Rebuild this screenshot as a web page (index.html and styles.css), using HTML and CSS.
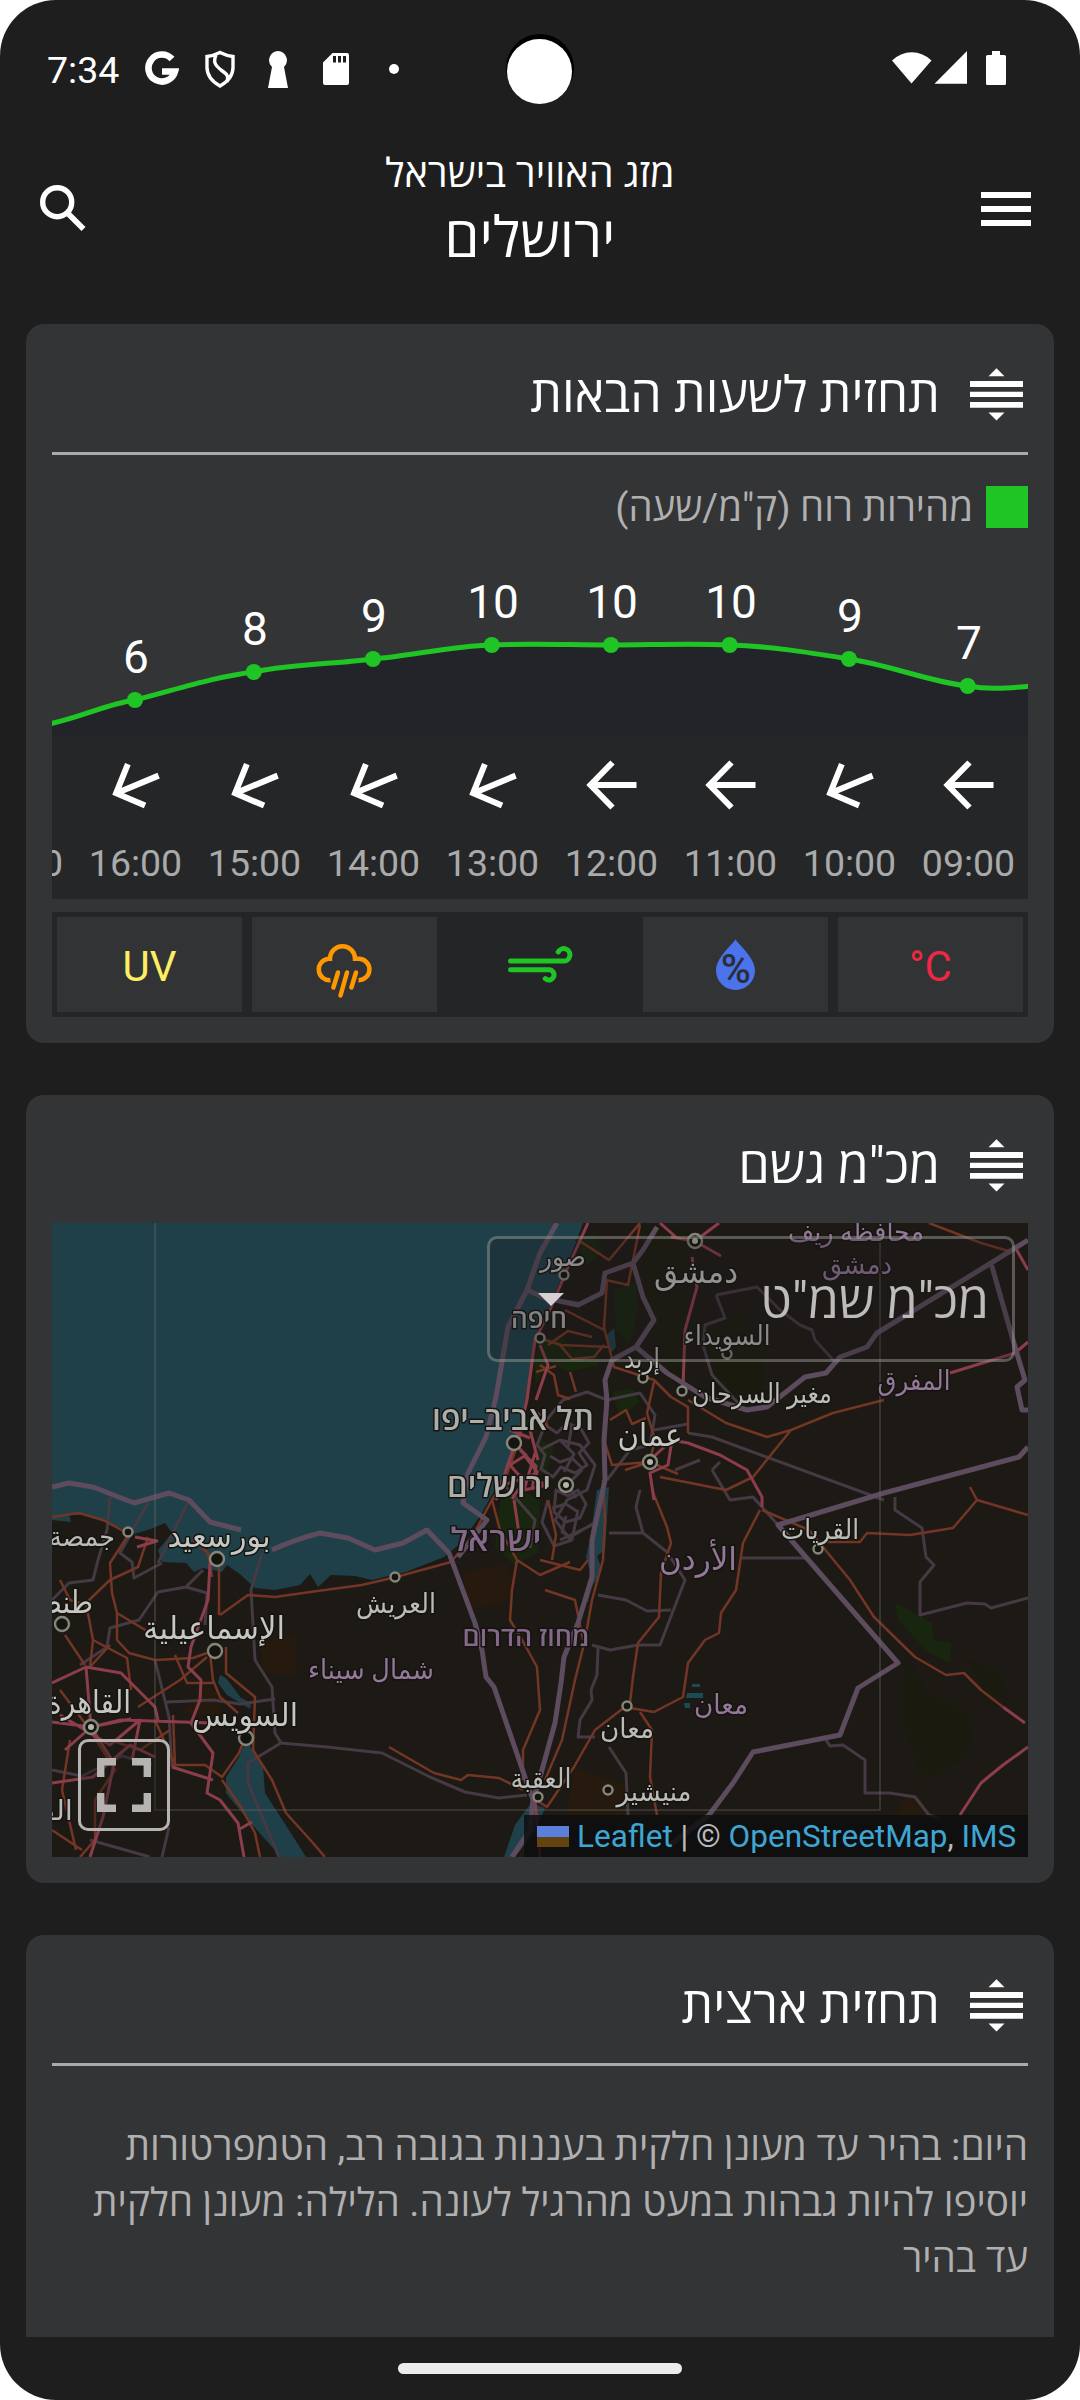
FILE: index.html
```html
<!DOCTYPE html>
<html lang="he" dir="rtl">
<head>
<meta charset="utf-8">
<title>מזג האוויר בישראל</title>
<link rel="stylesheet" href="styles.css">
</head>
<body>
<svg class="defs" width="0" height="0">
  <symbol id="drag" viewBox="0 0 53 53">
    <path d="M26.500 .3l8 8h-16zM26.500 52.500l-8-8h16zM0 13h53v6H0zM0 23.700h53v5.300H0zM0 34h53v5.700H0z" fill="#fff"/>
  </symbol>
  <symbol id="arrow" viewBox="-26 -26 52 52">
    <path d="M24.500 0H-20M.5-22.500L-21.500 0L.5 22.500" fill="none" stroke="#fff" stroke-width="6"/>
  </symbol>
</svg>
<div class="screen">
  <div class="status" dir="ltr">
    <span class="clock">7:34</span>
    <span class="tray">
      <svg viewBox="0 0 34 36" width="34" height="36"><path d="M27 8A13.500 13.500 0 1 0 30 20.500H17" fill="none" stroke="#fff" stroke-width="6.600"/></svg>
      <svg viewBox="0 0 32 38" width="32" height="38"><path d="M16 2.500c4 2 8 3.500 13 4v11c0 8-5 14-13 18.500C8 31.500 3 25.500 3 17.500v-11c5-.5 9-2 13-4zM12 5c-3 7-1 10 5 15 6 4 8 6 6 12" fill="none" stroke="#fff" stroke-width="3.400"/></svg>
      <svg viewBox="0 0 20 37" width="20" height="37"><path d="M10 0a9.300 9.300 0 0 1 6 16l4 21H0l4-21A9.300 9.300 0 0 1 10 0z" fill="#fff"/></svg>
      <svg viewBox="0 0 26 34" width="26" height="34"><path d="M9.500 1H24a2 2 0 0 1 2 2v28a2 2 0 0 1-2 2H2a2 2 0 0 1-2-2V10.500zM10 4v6.500h3V4zM15 4v6.500h3V4zM20 4v6.500h3V4z" fill="#fff" fill-rule="evenodd"/></svg>
      <svg viewBox="0 0 10 10" width="10" height="10"><circle cx="5" cy="5" r="5" fill="#fff"/></svg>
    </span>
    <svg class="signals" viewBox="891 50 116 36" width="116" height="36"><path d="M892 60.500a28 28 0 0 1 39.500 0L911.500 83.500zM934.500 83.700H967V51zM992 51h8v4h4.500a1.500 1.500 0 0 1 1.500 1.500v27a1.500 1.500 0 0 1-1.500 1.500h-17a1.500 1.500 0 0 1-1.500-1.500v-27a1.500 1.500 0 0 1 1.500-1.500h4.500z" fill="#fff"/></svg>
    <span class="camera"></span>
  </div>
  <header class="topbar" dir="ltr">
    <svg class="search" viewBox="0 0 46 46" width="46" height="46"><circle cx="17.200" cy="17.200" r="14.500" fill="none" stroke="#fff" stroke-width="5.400"/><path d="M28.500 29L43.500 44" stroke="#fff" stroke-width="5.600"/></svg>
    <div class="heading" dir="rtl">
      <div class="app">מזג האוויר בישראל</div>
      <div class="city">ירושלים</div>
    </div>
    <svg class="menu" viewBox="0 0 50 34" width="50" height="34"><path d="M0 0h50v6H0zM0 14h50v6H0zM0 28h50v6H0z" fill="#fff"/></svg>
  </header>

  <main class="content">
    <section class="card">
      <div class="card-head ruled">
        <svg width="53" height="53"><use href="#drag"/></svg>
        <h2>תחזית לשעות הבאות</h2>
      </div>
      <div class="legend"><span class="swatch"></span><span>מהירות רוח (ק"מ/שעה)</span></div>
      <svg class="chart" viewBox="52 528 976 207" width="976" height="207">
        <path d="M52 723.300C82 717 107 704 135 700C175 690 213 677 253.800 672C293 664 335 664 373 659C412 656 450 646 491.800 645C532 643 570 645 611 645C650 645 690 643 729.700 645C770 646 812 653 849 659C890 665 930 682 967.700 686C990 690 1008 688 1028 686.300V735H52z" fill="#232429"/>
        <path d="M48 724.300C82 717 107 704 135 700C175 690 213 677 253.800 672C293 664 335 664 373 659C412 656 450 646 491.800 645C532 643 570 645 611 645C650 645 690 643 729.700 645C770 646 812 653 849 659C890 665 930 682 967.700 686C990 690 1008 688 1032 686" fill="none" stroke="#1fc525" stroke-width="5"/>
        <g fill="#1fc525"><circle cx="135" cy="700" r="8"/><circle cx="253.800" cy="672" r="8"/><circle cx="373" cy="659" r="8"/><circle cx="491.800" cy="645" r="8"/><circle cx="611" cy="645" r="8"/><circle cx="729.700" cy="645" r="8"/><circle cx="849" cy="659" r="8"/><circle cx="967.700" cy="686" r="8"/></g>
        <g class="values"><text x="136" y="673">6</text><text x="255" y="645">8</text><text x="374" y="631.500">9</text><text x="493" y="618">10</text><text x="612" y="618">10</text><text x="731" y="618">10</text><text x="850" y="631.500">9</text><text x="969" y="659">7</text></g>
      </svg>
      <div class="hours">
        <div class="hour"><svg><use href="#arrow"/></svg><span>09:00</span></div>
        <div class="hour"><svg class="tilt"><use href="#arrow"/></svg><span>10:00</span></div>
        <div class="hour"><svg><use href="#arrow"/></svg><span>11:00</span></div>
        <div class="hour"><svg><use href="#arrow"/></svg><span>12:00</span></div>
        <div class="hour"><svg class="tilt"><use href="#arrow"/></svg><span>13:00</span></div>
        <div class="hour"><svg class="tilt"><use href="#arrow"/></svg><span>14:00</span></div>
        <div class="hour"><svg class="tilt"><use href="#arrow"/></svg><span>15:00</span></div>
        <div class="hour"><svg class="tilt"><use href="#arrow"/></svg><span>16:00</span></div>
        <div class="hour"><svg class="tilt"><use href="#arrow"/></svg><span>17:00</span></div>
      </div>
      <div class="tabs" dir="ltr">
        <div class="tab label uv">UV</div>
        <div class="tab"><svg viewBox="317 930 57 70" width="57" height="70"><g fill="none" stroke="#ff9800" stroke-width="4.500"><path d="M331.500 980.200A10.700 10.700 0 0 1 329.500 958.800H331A12.500 12.500 0 0 1 356 958.800H360A10.700 10.700 0 0 1 359.500 980.200"/><path stroke-linecap="round" d="M339 972.500l-4.600 15M348 972.500l-6.500 23M357 972.500l-4.600 15"/></g></svg></div>
        <div class="tab active"><svg viewBox="508 946 66 38" width="66" height="38"><path d="M511.500 961H564a6.200 6.200 0 1 0-4.800-9M511.500 969.700H550.500a5.200 5.200 0 1 1-4.200 9" fill="none" stroke="#1fc525" stroke-width="5" stroke-linecap="round"/></svg></div>
        <div class="tab"><svg viewBox="715 938 41 54" width="41" height="54"><path d="M735.500 939.500C740 946 755 958 755 970.500A19.500 19.500 0 0 1 716 970.500C716 958 731 946 735.500 939.500z" fill="#4b73eb"/><text x="735.800" y="983" class="percent">%</text></svg></div>
        <div class="tab label temp">°C</div>
      </div>
    </section>

    <section class="card">
      <div class="card-head">
        <svg width="53" height="53"><use href="#drag"/></svg>
        <h2>מכ"מ גשם</h2>
      </div>
      <div class="map">
        <svg class="tiles" viewBox="52 1223 976 634" width="976" height="634">
          <rect x="52" y="1223" width="976" height="634" fill="#1d1915"/>
          <g fill="#1f4049">
            <path d="M52 1223H583L575 1245L562 1276L547 1312L538 1318L537 1337L530 1377L520 1427L503 1477L489 1500L482 1513L461 1543L444 1557L406 1572L372 1580L355 1576L331 1575L318 1587L310 1574L300 1585L275 1590L255 1588L241 1575L227 1565L222 1572L203 1568L194 1572L186 1563L162 1562L158 1550L172 1533L165 1523L151 1529L134 1534L114 1525L83 1515L69 1515L71 1522L52 1520z"/>
            <path d="M246 1740L263 1767L265 1793L287 1827L306 1857H281L248 1820L226 1793V1777L239 1757z"/>
            <path d="M220 1675L226 1678L241 1698L251 1703L250 1709L227 1695L218 1683z"/>
            <path d="M597 1490L609 1487L605 1550L597 1556L602 1570L592 1587L588 1602L583 1598L591 1575L586 1557L590 1540z"/>
            <path d="M605 1337L614 1328L616 1347L611 1353z"/>
            <path d="M531 1803L545 1808L536 1830L515 1857H504L515 1825z"/>
            <path d="M692 1684h8v3h-8zM687 1693h16v5h-17zM684 1703h6v5h-5z" fill="#1a4a55"/>
          </g>
          <g fill="#18250f">
            <path d="M895 1602L932 1623L934 1640L951 1643L950 1663L929 1653L898 1620z"/>
            <path d="M614 1290L636 1282L638 1310L630 1345L616 1330z"/>
            <path d="M540 1340L560 1335L575 1350L600 1345L598 1365L570 1372L548 1362L536 1385L534 1360z"/>
            <path d="M500 1500L520 1490L540 1500L538 1552L515 1565L495 1548z"/>
            <path d="M612 1392l20-4 8 14-20 14zM540 1440l14 6-8 30-12-8zM575 1240l20-6 8 18-16 14z"/>
            <path d="M938 1750l10 4 8 14-8-2zM525 1420l10-8 2 20-8 4z"/>
          </g>
          <g fill="#1a1a0f">
            <path d="M640 1225L690 1232L683 1390L660 1370L648 1320L645 1270z"/>
            <path d="M700 1330L740 1310L765 1345L760 1400L715 1390z"/>
            <path d="M905 1650L925 1690L975 1715L965 1760L925 1780L903 1725zM968 1660l30 10 12 30-25-8z"/>
          </g>
          <g fill="#251a0d">
            <path d="M462 1572L505 1565L515 1582L503 1603L470 1610z"/>
            <path d="M258 1642L296 1634V1677L264 1672z"/>
            <path d="M575 1768L625 1785L628 1815H566z"/>
            <path d="M905 1797L922 1800L929 1815H896zM205 1685l20 12-8 20-36-4z"/>
          </g>
          <g class="admin">
            <path d="M688 1433L712 1437L884 1500M740 1558H805M712 1470L730 1500L753 1497L778 1525M712 1470L720 1462"/>
            <path d="M609 1533L643 1533L667 1552L685 1580L660 1645H638L610 1650L592 1645M640 1490L636 1507L643 1533M598 1595L626 1600L647 1611L671 1610"/>
            <path d="M598 1647L597 1675L591 1690L592 1700L580 1720L578 1737H595M609 1747L626 1773L628 1815"/>
            <path d="M895 1497V1510L922 1528L926 1557L934 1565L920 1582V1615L967 1603L985 1604L991 1608L1028 1598"/>
            <path d="M826 1740L830 1746L843 1745L865 1760V1793H890L915 1797L929 1815L940 1818"/>
            <path d="M110 1497L107 1530L98 1560L93 1580L69 1583L52 1600M148 1503L120 1553L132 1562L134 1578L162 1563M189 1500L158 1563"/>
            <path d="M203 1570L186 1587L158 1592L139 1620L110 1628L107 1647L80 1665M186 1587L207 1593L205 1625"/>
            <path d="M262 1553L251 1590L255 1660L272 1687L275 1733L281 1743L248 1763V1783L279 1857"/>
            <path d="M281 1743L327 1747L382 1753L430 1777L465 1792L499 1798L527 1795M155 1660L169 1717L172 1767M167 1702L213 1700L240 1704L275 1699M169 1827L162 1857"/>
            <path d="M716 1295L757 1287L780 1310L800 1325L812 1330L815 1340L836 1363M716 1295L725 1318L705 1325L703 1345L712 1375L740 1405"/>
            <path d="M607 1400L640 1393L655 1415L650 1445L630 1450L607 1480M607 1400l-20-8-24 8-18 22M545 1298L578 1303M654 1430l34-6M675 1470l25-10"/>
            <path d="M540 1450l20-10 20 5 15 20-8 25-20 10-12 20 14 18 25-15M560 1540L592 1525M548 1500l-6 22 12 24 18-6 6-30M560 1440l14 14-10 18M572 1425l-4 22M582 1470l-14 14 8 14"/>
            <path d="M52 1770l30 6 40-20 30 8M90 1840l60 17M500 1480L535 1520L530 1548"/>
            <path d="M545 1425l12 8 10-10 14 6 8 14-10 10 8 12-12 8-14-6-8 10-12-8 4-14-8-10zM556 1490l12 6 10-6 8 14-6 14-14 4-12-10zM550 1456l10 6 12-4 10 10M552 1508l14-4 12 8M566 1516l-4 16 10 6"/>
          </g>
          <g class="road">
            <path d="M52 1517L79 1513L103 1520L127 1533M220 1615L248 1595L275 1597L310 1592L362 1585L396 1577L451 1562L472 1537L492 1500L506 1477L520 1437L527 1397L535 1337"/>
            <path d="M219 1563V1615M193 1540L208 1553L212 1577M148 1537L138 1567L110 1580L86 1603L93 1640L90 1667L110 1645"/>
            <path d="M127 1537L110 1563L112 1593L117 1613V1640L129 1653L155 1660L193 1658L207 1653M117 1613l30 18M93 1640l34 18 4 32M60 1580l10 20 20 6M65 1635l20 30"/>
            <path d="M207 1657L180 1680L138 1707M210 1653L213 1680L220 1697L238 1713M226 1647V1673L255 1697L253 1750L272 1780L286 1813L313 1843L325 1857"/>
            <path d="M244 1740L239 1753L222 1777L205 1765L172 1765M222 1780L241 1807L255 1833L260 1857M175 1655l12 28 26 0"/>
            <path d="M389 1747L434 1773L461 1780L468 1775L499 1778L523 1790M517 1560L512 1590L510 1620L525 1645L537 1667L540 1710L523 1750V1780M492 1500L500 1530L517 1560L540 1575L570 1562"/>
            <path d="M652 1490L667 1527L671 1543L661 1573L659 1617L638 1643L633 1677L630 1703L595 1730L574 1767L547 1807L536 1800"/>
            <path d="M760 1510L743 1543L736 1590L721 1613L719 1633L705 1640L688 1663L683 1697L654 1712L630 1708M640 1712L652 1730L650 1777L657 1815"/>
            <path d="M762 1510L809 1530L850 1580L874 1617L915 1657L946 1675L964 1673L981 1690L1003 1707M815 1542L860 1542L867 1533L910 1535L953 1528L977 1500L1028 1515M977 1500L970 1487"/>
            <path d="M688 1400L726 1423L767 1437L791 1430L833 1413L884 1400M791 1430L753 1477L726 1490L660 1477M929 1223L981 1243L1012 1252"/>
            <path d="M607 1280L604 1327L614 1367L654 1380L671 1397L688 1407V1433M640 1223L609 1260L578 1240M654 1382L647 1413L655 1440L650 1460M545 1340L561 1345L609 1347M565 1310L604 1330"/>
            <path d="M603 1480L605 1520L603 1560L592 1600L585 1640L575 1680L562 1740L545 1780M545 1590L575 1600L583 1640M540 1560L580 1570L588 1560M548 1500L556 1535L552 1560M625 1470l25-8 28 12M640 1225l-12 60-22-5M606 1395L604 1440L612 1465L650 1462"/>
            <path d="M60 1690l30 40 25 40-20 30 0 40-15 17M70 1740l-8 50 14 60M155 1720l20 45-2-50M110 1740l30 10 30-20M52 1830l30 20"/>
            <path d="M540 1365l14 10 4 20 12 4M560 1345l12 14 22-2 10-12M536 1372l20-6M548 1345l20-14 24 6M530 1410l14 6 4 12M570 1372l6 20M610 1420l16-10 6 14 14-6"/>
          </g>
          <g class="motorway">
            <path d="M588 1223L568 1267L550 1310L535 1340L527 1400L520 1430L506 1470L496 1500M692 1257L697 1287L685 1330L683 1387M671 1237L695 1241L719 1223M698 1243L721 1256M660 1223l18 16"/>
            <path d="M1015 1247L1028 1270M950 1373L1015 1353L1028 1342M650 1460L672 1440L688 1443L720 1455L747 1470L762 1497V1507M672 1440L668 1465L650 1473L654 1500"/>
            <path d="M1003 1707L1025 1723M1028 1747L1003 1765L981 1783L960 1815M535 1800L540 1857M540 1345L548 1365L536 1400"/>
            <path d="M210 1563L208 1600L191 1647L188 1667L201 1680L200 1700L191 1723L213 1753L207 1793L220 1800L238 1823L244 1857M238 1830l14-8"/>
            <path d="M52 1683L86 1667L121 1673L155 1707L158 1720M52 1722L91 1727L121 1720L213 1723M86 1667L91 1727L114 1763L103 1817L90 1857M172 1767L213 1780M52 1783L93 1777L130 1745L155 1757M60 1715l50 30 30-25-8 40M65 1750l26-23 40-8"/>
            <path d="M135 1537l22 4-20 6M514 1443l12 12-16 10 14 16-12 18M520 1450l16 16-4 24M510 1430l20 8M536 1450l-12 40 24-5M518 1475l30 10M524 1455l14 18M514 1500l6 40M530 1430l8 30 M504 1485l34 -12"/>
          </g>
          <g class="border">
            <path d="M52 1487L69 1483L93 1487L134 1503L169 1493L189 1500L210 1522L241 1530M272 1550Q293 1540 320 1533L348 1538L375 1550L403 1543L427 1530L449 1553L475 1623L482 1650L486 1677L494 1687L527 1783L533 1800"/>
            <path d="M557 1223L540 1253L527 1290L508 1327L496 1397L486 1437L468 1473L463 1503L487 1520L458 1557"/>
            <path d="M527 1290L545 1298L578 1305L602 1293L605 1273L633 1263L643 1250L657 1227M633 1263L643 1297L654 1320L636 1347L612 1360L605 1380L607 1400L604 1440L605 1480L592 1540V1577L578 1623L564 1657L561 1683L555 1723L542 1770L533 1800L530 1830L512 1857"/>
            <path d="M636 1347L667 1373L705 1397L747 1410L767 1407L805 1377L826 1373L840 1357L867 1347L877 1333L991 1263L1028 1240M991 1263L1015 1347L1025 1380L1017 1387L1022 1410H1028"/>
            <path d="M1028 1447L1019 1457L884 1493L778 1525L898 1663L858 1688L840 1735L753 1752L733 1783L709 1815L670 1845"/>
          </g>
          <path d="M155 1223V1810H880V1223" fill="none" stroke="#6b6b68" stroke-opacity=".45" stroke-width="1.600"/>
          <g class="dot">
            <circle cx="564" cy="1275" r="4.500"/><circle cx="540" cy="1338" r="4.500"/><circle cx="727" cy="1354" r="4.500"/><circle cx="643" cy="1378" r="4.500"/><circle cx="682" cy="1391" r="4.500"/><circle cx="514" cy="1443" r="7"/><circle cx="818" cy="1549" r="4.500"/><circle cx="627" cy="1706" r="4.500"/><circle cx="608" cy="1790" r="4.500"/><circle cx="538" cy="1797" r="4.500"/><circle cx="217" cy="1559" r="7"/><circle cx="128" cy="1532" r="4.500"/><circle cx="62" cy="1624" r="7"/><circle cx="215" cy="1651" r="7"/><circle cx="246" cy="1738" r="7"/><circle cx="395" cy="1577" r="4.500"/>
            <circle cx="695" cy="1241" r="7"/><circle cx="650" cy="1462" r="7"/><circle cx="566" cy="1485" r="7"/><circle cx="91" cy="1727" r="7"/>
          </g>
          <g fill="#b5b5ac"><circle cx="695" cy="1241" r="3"/><circle cx="650" cy="1462" r="3"/><circle cx="566" cy="1485" r="3"/><circle cx="91" cy="1727" r="3"/></g>
          <g class="place">
            <text class="l he" x="513" y="1430" textLength="162" lengthAdjust="spacingAndGlyphs">תל אביב–יפו</text>
            <text class="l he" x="499" y="1497" textLength="104" lengthAdjust="spacingAndGlyphs">ירושלים</text>
            <text class="he" x="539" y="1328" textLength="56" lengthAdjust="spacingAndGlyphs">חיפה</text>
            <text x="563" y="1266" textLength="46" lengthAdjust="spacingAndGlyphs">صور</text>
            <text class="l" x="696" y="1283" textLength="84" lengthAdjust="spacingAndGlyphs">دمشق</text>
            <text x="727" y="1345" textLength="87" lengthAdjust="spacingAndGlyphs">السويداء</text>
            <text x="642" y="1368" textLength="36" lengthAdjust="spacingAndGlyphs">إربد</text>
            <text x="762" y="1403" textLength="140" lengthAdjust="spacingAndGlyphs">مغير السرحان</text>
            <text class="l" x="650" y="1446" textLength="65" lengthAdjust="spacingAndGlyphs">عمان</text>
            <text x="820" y="1539" textLength="78" lengthAdjust="spacingAndGlyphs">القريات</text>
            <text x="627" y="1738" textLength="54" lengthAdjust="spacingAndGlyphs">معان</text>
            <text x="654" y="1801" textLength="75" lengthAdjust="spacingAndGlyphs">منيشير</text>
            <text x="541" y="1788" textLength="61" lengthAdjust="spacingAndGlyphs">العقبة</text>
            <text x="82" y="1546" textLength="66" lengthAdjust="spacingAndGlyphs">جمصة</text>
            <text class="l" x="219" y="1547" textLength="103" lengthAdjust="spacingAndGlyphs">بورسعيد</text>
            <text class="l" x="62" y="1613" textLength="62" lengthAdjust="spacingAndGlyphs">طنطا</text>
            <text class="l" x="214" y="1639" textLength="142" lengthAdjust="spacingAndGlyphs">الإسماعيلية</text>
            <text x="396" y="1613" textLength="80" lengthAdjust="spacingAndGlyphs">العريش</text>
            <text class="l" x="89" y="1713" textLength="84" lengthAdjust="spacingAndGlyphs">القاهرة</text>
            <text class="l" x="245" y="1726" textLength="106" lengthAdjust="spacingAndGlyphs">السويس</text>
            <text x="36" y="1820" textLength="74" lengthAdjust="spacingAndGlyphs">الفيوم</text>
          </g>
          <g class="place region">
            <text class="l he" x="496" y="1551" textLength="91" lengthAdjust="spacingAndGlyphs">ישראל</text>
            <text class="he" x="526" y="1646" textLength="127" lengthAdjust="spacingAndGlyphs">מחוז הדרום</text>
            <text x="856" y="1241" textLength="136" lengthAdjust="spacingAndGlyphs">محافظه ريف</text>
            <text x="857" y="1274" textLength="70" lengthAdjust="spacingAndGlyphs">دمشق</text>
            <text x="914" y="1390" textLength="73" lengthAdjust="spacingAndGlyphs">المفرق</text>
            <text class="l" x="698" y="1570" textLength="78" lengthAdjust="spacingAndGlyphs">الأردن</text>
            <text x="721" y="1714" textLength="54" lengthAdjust="spacingAndGlyphs">معان</text>
            <text x="371" y="1679" textLength="126" lengthAdjust="spacingAndGlyphs">شمال سيناء</text>
          </g>
        </svg>
        <div class="select"><span>מכ"מ שמ"ט</span><svg viewBox="0 0 26 13" width="26" height="13"><path d="M0 0h26L13 13z" fill="#d4d0d4"/></svg></div>
        <div class="fullscreen"><svg viewBox="0 0 54 54" width="54" height="54"><path d="M3.700 19V3.700H19M35 3.700h15.300V19M50.300 35v15.300H35M19 50.300H3.700V35" fill="none" stroke="#b5b4b2" stroke-width="7.400"/></svg></div>
        <div class="credits" dir="ltr"><span class="flag"></span><span class="credit-text"><a>Leaflet</a> | © <a>OpenStreetMap</a>, <a>IMS</a></span></div>
      </div>
    </section>

    <section class="card last">
      <div class="card-head ruled">
        <svg width="53" height="53"><use href="#drag"/></svg>
        <h2>תחזית ארצית</h2>
      </div>
      <p class="forecast">היום: בהיר עד מעונן חלקית בעננות בגובה רב, הטמפרטורות<br>יוסיפו להיות גבהות במעט מהרגיל לעונה. הלילה: מעונן חלקית<br>עד בהיר</p>
    </section>
  </main>
  <div class="navbar"><span></span></div>
</div>
</body>
</html>
```
FILE: styles.css
```css
* { box-sizing: border-box; }
body { margin: 0; background: #fff; font-family: Roboto, "Open Sans", "Noto Sans", "DejaVu Sans", sans-serif; color: #fff; }
.defs { position: absolute; }
svg { display: block; flex: none; }
.screen { width: 1080px; height: 2400px; border-radius: 56px; background: #1e1e1e; overflow: hidden; display: flex; flex-direction: column; }

.status { position: relative; height: 136px; flex: none; display: flex; align-items: flex-start; padding: 0 73px 0 47px; }
.clock { width: 86px; margin-top: 48px; font-size: 37.5px; line-height: 44px; }
.tray { display: grid; grid-template-columns: repeat(5, 58px); justify-items: center; align-items: center; height: 38px; margin-top: 50px; }
.signals { margin: 50px 0 0 auto; }
.camera { position: absolute; left: 506px; top: 34px; width: 68px; height: 68px; border-radius: 50%; background: #000; }
.camera::after { content: ""; position: absolute; left: 1px; top: 5px; width: 65px; height: 65px; border-radius: 50%; background: #fff; }

.topbar { height: 163px; flex: none; display: grid; grid-template-columns: 110px 1fr 130px; }
.search { margin: 49px 0 0 40px; }
.menu { margin: 56px 0 0 31px; }
.heading { text-align: center; padding-top: 10px; }
.app { font-size: 39.7px; line-height: 56px; }
.city { font-size: 56px; line-height: 72px; }

.content { flex: 1; min-height: 0; overflow: hidden; padding: 25px 26px 0; display: flex; flex-direction: column; gap: 52px; }
.card { flex: none; background: #333436; border-radius: 18px; padding: 26px; }
.card-head { height: 102px; display: flex; align-items: flex-start; gap: 30px; padding: 18px 5px 0 0; }
.ruled { height: 105px; border-bottom: 3px solid #aaa; }
h2 { margin: -3px 0 0; font-size: 50px; line-height: 60px; font-weight: 400; }

.legend { margin-top: 31px; height: 42px; display: flex; align-items: center; gap: 13px; font-size: 38.4px; line-height: 44px; color: #b0b0b0; }
.legend span:last-child { padding-top: 2px; }
.swatch { width: 42px; height: 42px; background: #1fc525; }
.values { font-size: 46px; fill: #fff; text-anchor: middle; direction: ltr; }
.hours { height: 164px; background: #252628; display: flex; overflow: hidden; }
.hour { flex: none; width: 119px; display: flex; flex-direction: column; align-items: center; padding-top: 24px; font-size: 37.5px; line-height: 44px; color: #aaa; }
.hour svg { width: 52px; height: 52px; margin-bottom: 30px; }
.hour .tilt { transform: rotate(-22.5deg); }
.tabs { margin-top: 13px; height: 105px; background: #242527; padding: 5px; display: flex; gap: 10px; }
.tab { flex: 1; background: #323335; display: flex; align-items: center; justify-content: center; }
.label { font-size: 42px; padding-top: 4px; }
.active { background: none; }
.uv { color: #fdee62; }
.temp { color: #ee2842; }
.percent { font-size: 41px; font-weight: 500; fill: #2b2d38; text-anchor: middle; direction: ltr; }

.map { position: relative; height: 634px; overflow: hidden; }
.tiles { filter: blur(.6px); }
.admin { fill: none; stroke: #453943; stroke-width: 3; stroke-linejoin: round; }
.road { fill: none; stroke: #733524; stroke-width: 2.5; stroke-linejoin: round; }
.motorway { fill: none; stroke: #8c3d4b; stroke-width: 3; stroke-linejoin: round; }
.border { fill: none; stroke: #5d4c5d; stroke-width: 5; stroke-linejoin: round; }
.dot { fill: #15140f; stroke: #85867a; stroke-width: 2.4; }
.place { font-family: "Open Sans", "DejaVu Sans", sans-serif; font-size: 27px; fill: #bbbbb8; text-anchor: middle; direction: rtl; stroke: #15140f; stroke-width: 3px; stroke-linejoin: round; paint-order: stroke; }
.place .l { font-size: 32px; fill: #c6c6c3; }
.place .he { font-weight: 600; fill: #adadaa; }
.region, .region .l { fill: #94789b; }
.region .he { fill: #83688a; }
.select { position: absolute; left: 435px; top: 13px; width: 528px; height: 126px; border: 3px solid rgba(200,200,195,.36); border-radius: 10px; background: rgba(30,28,30,.3); display: flex; align-items: center; justify-content: space-between; padding: 0 23px 0 48px; font-size: 50px; color: #bdbcba; }
.fullscreen { position: absolute; left: 26px; top: 516px; width: 92px; height: 92px; border: 3px solid #b5b4b2; border-radius: 10px; background: rgba(30,28,26,.4); display: flex; align-items: center; justify-content: center; }
.credits { position: absolute; right: 0; bottom: 0; width: 504px; height: 42px; background: rgba(14,14,15,.85); display: flex; align-items: center; gap: 8px; padding-left: 13px; font-size: 31.5px; color: #bbb; white-space: nowrap; }
.credits a { color: #3ea6d3; }
.flag { width: 32px; height: 21px; background: linear-gradient(#5b80dc 50%, #63430f 50%); }

.last { border-radius: 18px 18px 0 0; height: 402px; padding-bottom: 0; }
.forecast { margin: 53px 0 0; font-size: 38.7px; line-height: 56px; color: #b0b0b0; white-space: nowrap; }
.navbar { flex: none; height: 63px; display: flex; justify-content: center; padding-top: 26px; }
.navbar span { width: 284px; height: 11px; border-radius: 6px; background: #ececec; }
```
